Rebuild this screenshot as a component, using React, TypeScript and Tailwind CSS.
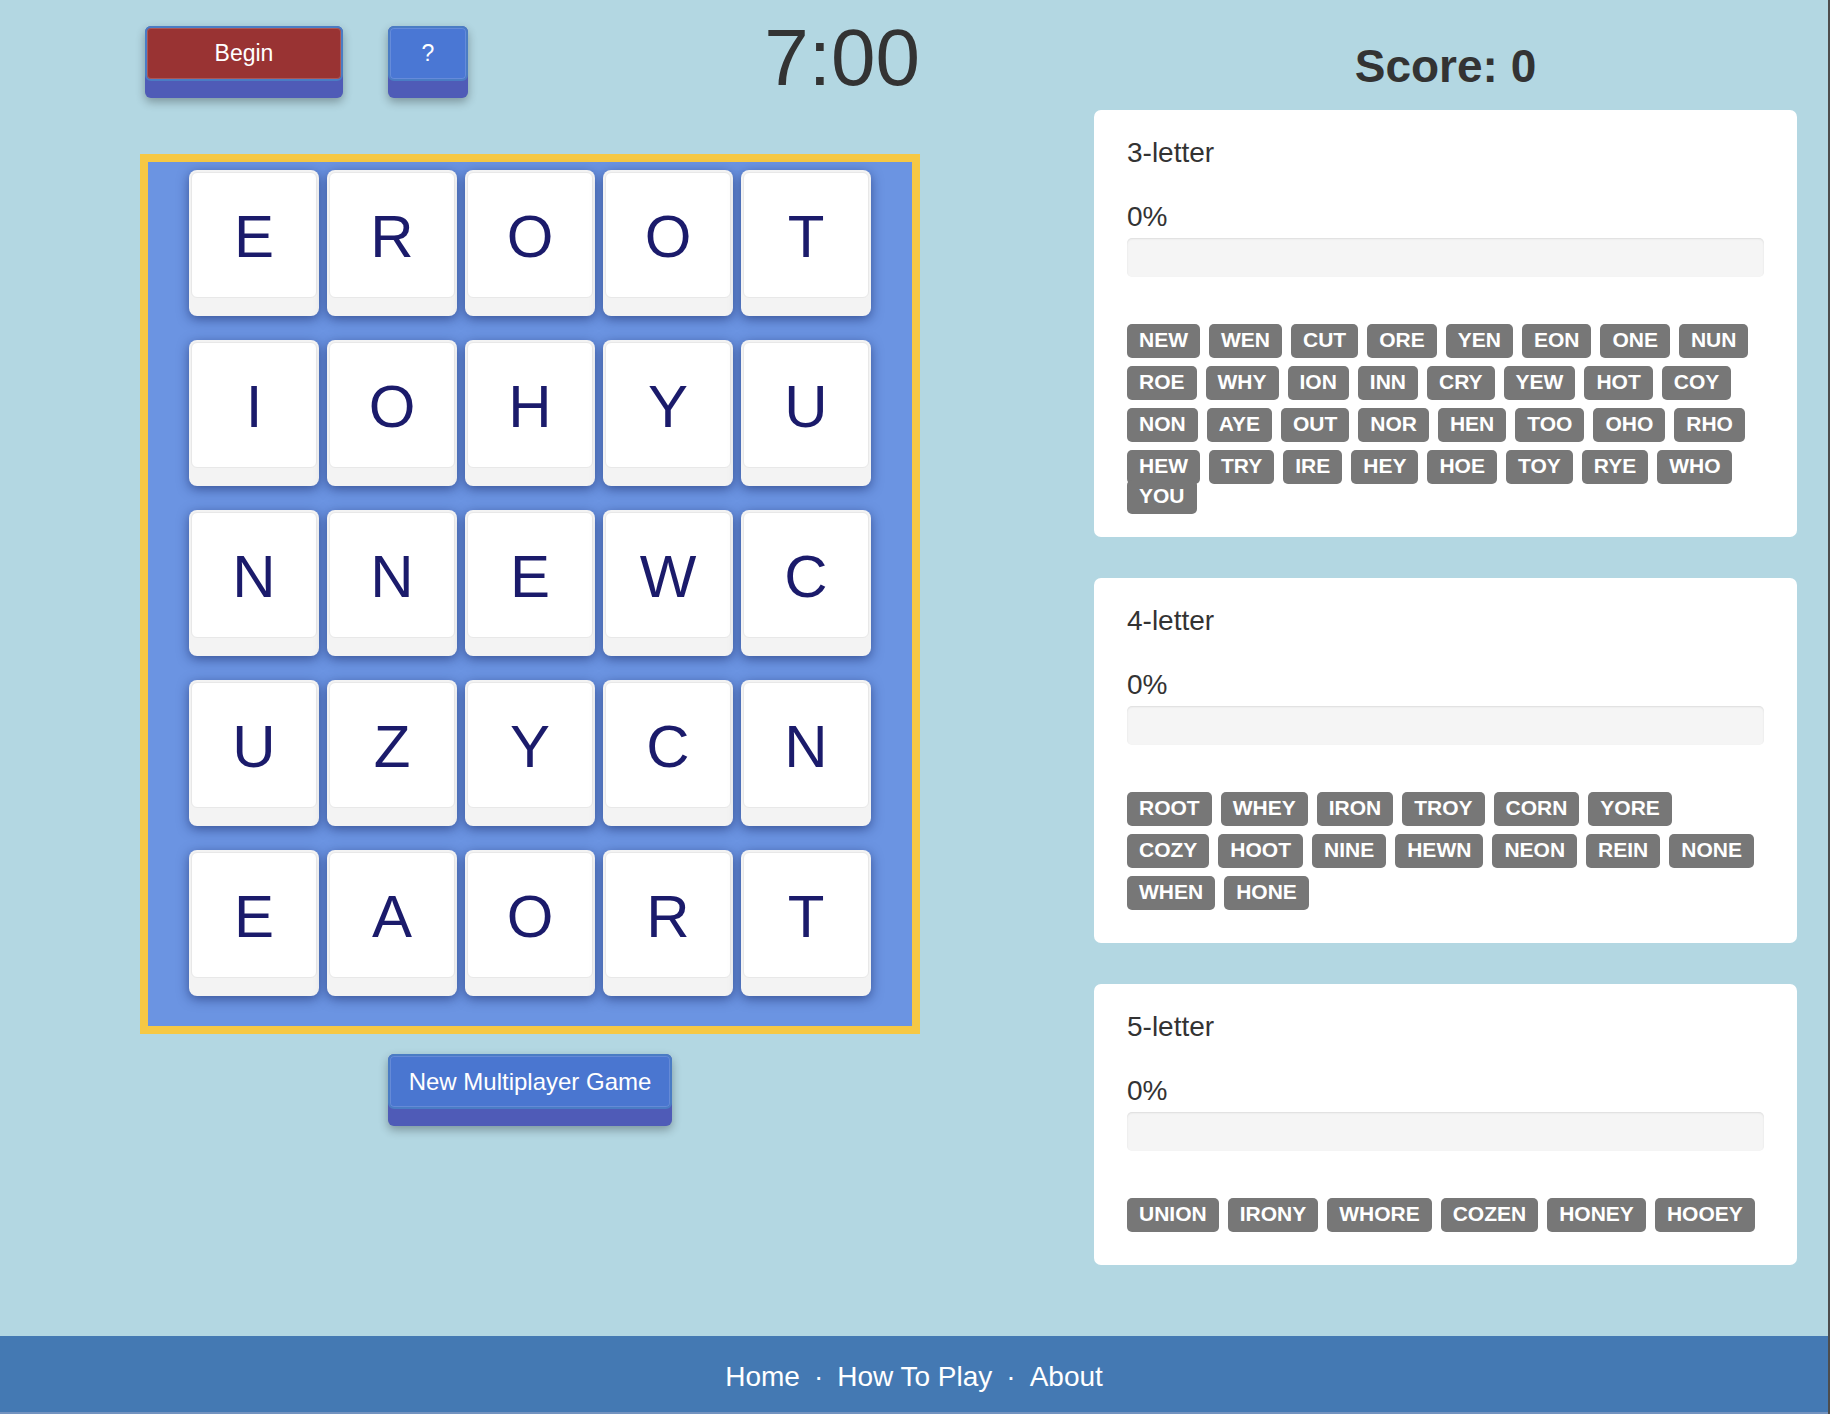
import React from "react";

const board: string[][] = [
  ["E", "R", "O", "O", "T"],
  ["I", "O", "H", "Y", "U"],
  ["N", "N", "E", "W", "C"],
  ["U", "Z", "Y", "C", "N"],
  ["E", "A", "O", "R", "T"],
];

const three: string[][] = [
  ["NEW", "WEN", "CUT", "ORE", "YEN", "EON", "ONE", "NUN"],
  ["ROE", "WHY", "ION", "INN", "CRY", "YEW", "HOT", "COY"],
  ["NON", "AYE", "OUT", "NOR", "HEN", "TOO", "OHO", "RHO"],
  ["HEW", "TRY", "IRE", "HEY", "HOE", "TOY", "RYE", "WHO"],
];
const four: string[][] = [
  ["ROOT", "WHEY", "IRON", "TROY", "CORN", "YORE"],
  ["COZY", "HOOT", "NINE", "HEWN", "NEON", "REIN", "NONE"],
  ["WHEN", "HONE"],
];
const five: string[][] = [["UNION", "IRONY", "WHORE", "COZEN", "HONEY", "HOOEY"]];

function Tag({ w }: { w: string }) {
  return (
    <span className="inline-block rounded-[5px] bg-[#777777] px-[12px] pt-[5px] pb-[8px] text-[21px] font-bold leading-none text-white">
      {w}
    </span>
  );
}

function Rows({ rows }: { rows: string[][] }) {
  return (
    <div className="flex flex-col gap-[8px]">
      {rows.map((r, i) => (
        <div key={i} className="flex gap-[9px]">
          {r.map((w) => (
            <Tag key={w} w={w} />
          ))}
        </div>
      ))}
    </div>
  );
}

function Card({
  title,
  rows,
  extra,
  tight,
}: {
  title: string;
  rows: string[][];
  extra?: string;
  tight?: boolean;
}) {
  return (
    <div
      className={
        tight
          ? "rounded-[7px] bg-white px-[33px] pt-[29px] pb-[23px]"
          : "rounded-[7px] bg-white px-[33px] pt-[29px] pb-[33px]"
      }
    >
      <div className="text-[28px] leading-none text-[#333333]">{title}</div>
      <div className="mt-[36px] text-[28px] leading-none text-[#333333]">0%</div>
      <div className="mt-[7px] h-[39px] rounded-[5px] bg-[#f5f5f5] shadow-[inset_0_1px_2px_rgba(0,0,0,0.1)]" />
      <div className="mt-[47px]">
        <Rows rows={rows} />
        {extra ? (
          <div className="mt-[-4px] flex">
            <Tag w={extra} />
          </div>
        ) : null}
      </div>
    </div>
  );
}

function Tile({ l }: { l: string }) {
  return (
    <div className="h-[146px] w-[130px] rounded-[8px] bg-[#f3f3f3] px-[2px] pt-[2px] pb-[18px] shadow-[0_3px_12px_rgba(15,30,90,0.55)]">
      <div className="flex h-full items-center justify-center rounded-[6px] border border-[#e8e8e8] bg-white pt-[4px] text-[60px] leading-none text-[#1b1b6b]">
        {l}
      </div>
    </div>
  );
}

export default function App() {
  return (
    <div className="flex min-h-[1414px] flex-col border-r-2 border-[#4d4d4d] bg-[#b3d7e2] font-['Liberation_Sans',Arial,Helvetica,sans-serif]">
      <div className="flex flex-1">
        {/* left column */}
        <div className="ml-[140px] w-[780px]">
          <div className="flex items-start pt-[26px]">
            <div className="ml-[5px] w-[198px] rounded-[6px] bg-[#4f5bb7] pb-[17px] shadow-[0_4px_10px_rgba(0,0,0,0.3)]">
              <div className="flex h-[55px] items-center justify-center rounded-[6px] border-2 border-[#4a7cc4] bg-[#993333] text-[23px] text-white shadow-[inset_0_0_0_1px_rgba(255,255,255,0.18)]">
                Begin
              </div>
            </div>
            <div className="ml-[45px] w-[80px] rounded-[6px] bg-[#4f5bb7] pb-[17px] shadow-[0_4px_10px_rgba(0,0,0,0.3)]">
              <div className="flex h-[55px] items-center justify-center rounded-[6px] border-2 border-[#4a7cc4] bg-[#4a77d4] text-[23px] text-white shadow-[inset_0_0_0_1px_rgba(255,255,255,0.15)]">
                ?
              </div>
            </div>
            <div className="ml-auto mt-[-8px] text-[80px] leading-none text-[#333333]">7:00</div>
          </div>
          <div className="mt-[56px] flex flex-col items-center">
            <div className="flex w-[780px] flex-col items-center gap-[24px] border-[8px] border-[#f6c844] bg-[#6b94e2] pt-[8px] pb-[30px]">
              {board.map((r, i) => (
                <div key={i} className="flex gap-[8px]">
                  {r.map((l, j) => (
                    <Tile key={j} l={l} />
                  ))}
                </div>
              ))}
            </div>
            <div className="mt-[20px] w-[284px] rounded-[6px] bg-[#4f5bb7] pb-[17px] shadow-[0_4px_10px_rgba(0,0,0,0.3)]">
              <div className="flex h-[55px] items-center justify-center rounded-[6px] border-2 border-[#4a7cc4] bg-[#4a76d0] text-[24px] text-white shadow-[inset_0_0_0_1px_rgba(255,255,255,0.15)]">
                New Multiplayer Game
              </div>
            </div>
          </div>
        </div>

        {/* right column */}
        <div className="ml-[174px] w-[703px] pt-[43px]">
          <div className="text-center text-[46px] font-bold leading-none text-[#333333]">Score: 0</div>
          <div className="mt-[21px] flex flex-col gap-[41px]">
            <Card title="3-letter" rows={three} extra="YOU" tight />
            <Card title="4-letter" rows={four} />
            <Card title="5-letter" rows={five} />
          </div>
        </div>
      </div>

      <div className="flex h-[78px] items-center justify-center border-b-2 border-[#7393c0] bg-[#4479b3] pt-[6px] text-[28px] text-white">
        <span>Home</span>
        <span className="mx-[14px]">·</span>
        <span>How To Play</span>
        <span className="mx-[14px]">·</span>
        <span>About</span>
      </div>
    </div>
  );
}
